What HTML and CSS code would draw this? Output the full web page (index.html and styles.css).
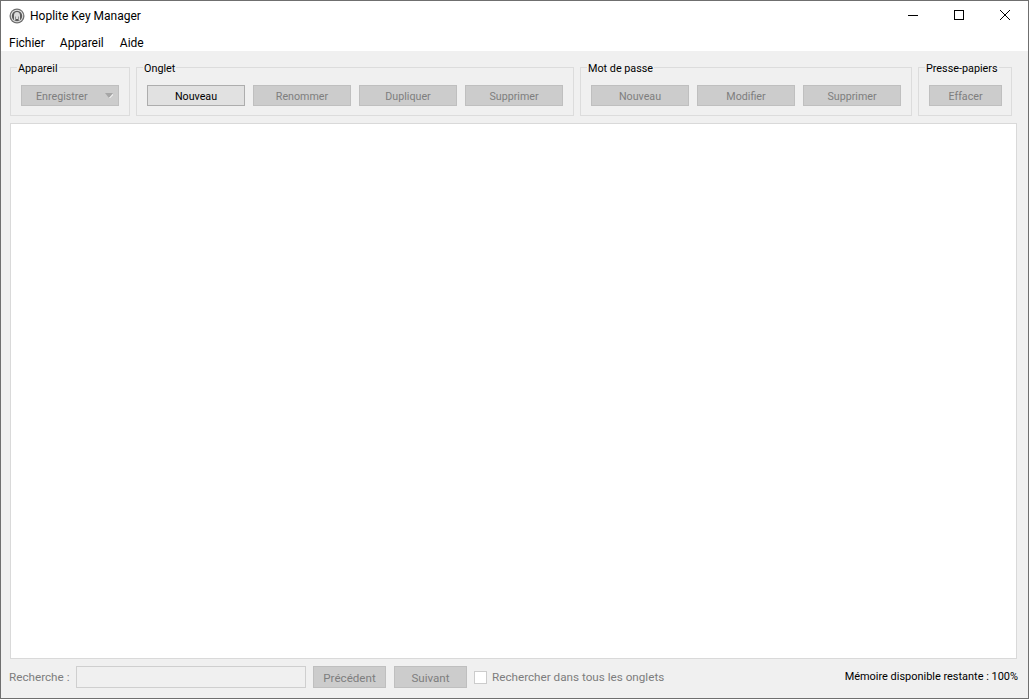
FILE: index.html
```html
<!DOCTYPE html>
<html lang="fr">
<head>
<meta charset="utf-8">
<title>Hoplite Key Manager</title>
<link rel="stylesheet" href="styles.css">
</head>
<body>
<div class="window">
  <header class="titlebar">
    <svg class="appicon" width="16" height="16" viewBox="0 0 16 16">
      <circle cx="8" cy="8" r="7.500" fill="#707070"/>
      <circle cx="8" cy="8" r="6.200" fill="#e4e4e4"/>
      <circle cx="8" cy="8" r="5.200" fill="#5a5a5a"/>
      <path d="M5 12.500V7.300C5 5.200 6.200 4 8 4s3 1.200 3 3.300v5.200H9.600V8.400H9V11H7V8.400H6.400v4.100Z" fill="#dcdcdc"/>
    </svg>
    <span class="title">Hoplite Key Manager</span>
    <div class="winbtns">
      <svg class="winbtn" width="46" height="30" viewBox="0 0 46 30"><path d="M18 14.500H28" stroke="#000" fill="none"/></svg>
      <svg class="winbtn" width="46" height="30" viewBox="0 0 46 30"><rect x="18.500" y="9.500" width="9" height="9" stroke="#000" fill="none"/></svg>
      <svg class="winbtn" width="46" height="30" viewBox="0 0 46 30"><path d="M18 9L28 19M28 9L18 19" stroke="#000" fill="none"/></svg>
    </div>
  </header>
  <nav class="menubar"><span>Fichier</span><span>Appareil</span><span class="menu-last">Aide</span></nav>
  <main class="content">
    <div class="toolbar">
      <section class="group g-device">
        <h2 class="legend">Appareil</h2>
        <div class="btn dis split"><span class="split-label">Enregistrer</span>
          <svg class="caret" width="8" height="5" viewBox="0 0 8 5"><path d="M0 0H8L4 5Z" fill="#a6a6a6"/><path d="M4 5L8 1V2L5 5Z" fill="#fff"/></svg>
        </div>
      </section>
      <section class="group g-tab">
        <h2 class="legend">Onglet</h2>
        <div class="btn on">Nouveau</div>
        <div class="btn dis">Renommer</div>
        <div class="btn dis">Dupliquer</div>
        <div class="btn dis">Supprimer</div>
      </section>
      <section class="group g-pass">
        <h2 class="legend">Mot de passe</h2>
        <div class="btn dis">Nouveau</div>
        <div class="btn dis">Modifier</div>
        <div class="btn dis">Supprimer</div>
      </section>
      <section class="group g-clip">
        <h2 class="legend">Presse-papiers</h2>
        <div class="btn dis wide">Effacer</div>
      </section>
    </div>
    <div class="panel"></div>
    <footer class="searchbar">
      <span class="muted label">Recherche :</span>
      <div class="input"></div>
      <div class="btn dis sb b1">Précédent</div>
      <div class="btn dis sb b2">Suivant</div>
      <span class="check"></span>
      <span class="muted find">Rechercher dans tous les onglets</span>
      <span class="memory">Mémoire disponible restante : 100%</span>
    </footer>
  </main>
</div>
</body>
</html>
```
FILE: styles.css
```css
* { box-sizing: border-box; }
html, body { margin: 0; padding: 0; }
body { width: 1029px; height: 699px; overflow: hidden; font-family: Roboto, "Open Sans", sans-serif; font-size: 12px; color: #000; }
.window { width: 1029px; height: 699px; border: 1px solid #6f6f6f; display: flex; flex-direction: column; background: #fff; }
.titlebar { height: 30px; display: flex; align-items: center; padding-left: 8px; flex: none; }
.appicon { flex: none; }
.title { margin-left: 5px; font-size: 12px; }
.winbtns { margin-left: auto; display: flex; }
.winbtn { display: block; }
.menubar { height: 20px; flex: none; display: flex; gap: 15px; padding-left: 8px; padding-top: 2px; font-size: 12px; line-height: 20px; }
.menu-last { margin-left: 1px; }
.content { flex: 1; background: #f0f0f0; padding: 16px 11px 0 9px; display: flex; flex-direction: column; min-height: 0; }
.toolbar { display: flex; gap: 6px; height: 49px; flex: none; }
.group { position: relative; margin: 0; padding: 17px 10px 0 10px; border: 1px solid #dcdcdc; height: 49px; display: flex; gap: 8px; }
.legend { position: absolute; left: 6px; top: -6px; margin: 0; padding: 0 1px; background: #f0f0f0; font-weight: 400; line-height: 14px; font-size: 10.800px; white-space: nowrap; }
.g-device { width: 120px; }
.g-tab { width: 438px; }
.g-pass { width: 332px; }
.g-clip { width: 94px; }
.btn { width: 98px; height: 21px; border: 1px solid #adadad; background: #e1e1e1; text-align: center; line-height: 21px; font-size: 10.700px; flex: none; }
.btn.dis { background: #cccccc; border-color: #bfbfbf; color: #7e7e7e; }
.btn.on { border-color: #adadad; background: #e1e1e1; }
.btn.wide { width: 73px; }
.split { display: flex; align-items: center; padding-left: 14px; gap: 17px; }
.split-label { padding-top: 1px; }
.caret { display: block; flex: none; margin-top: -1px; }
.panel { height: 536px; margin-top: 7px; flex: none; background: #fff; border: 1px solid #d9d9d9; }
.searchbar { display: flex; align-items: center; margin-top: 7px; height: 22px; flex: none; font-size: 11.700px; line-height: 24px; }
.muted { color: #7d7d7d; }
.label { width: 67px; margin-left: -1px; flex: none; }
.input { width: 230px; height: 22px; flex: none; background: #f0f0f0; border: 1px solid #cfcfcf; }
.btn.sb { width: 73px; height: 22px; line-height: 22px; font-size: 11.600px; }
.b1 { margin-left: 7px; }
.b2 { margin-left: 8px; }
.check { width: 13px; height: 13px; background: #fff; border: 1px solid #cccccc; margin: 0 5px 0 7px; flex: none; }
.memory { margin-left: auto; font-size: 10.950px; margin-right: -1px; color: #000; }
```
